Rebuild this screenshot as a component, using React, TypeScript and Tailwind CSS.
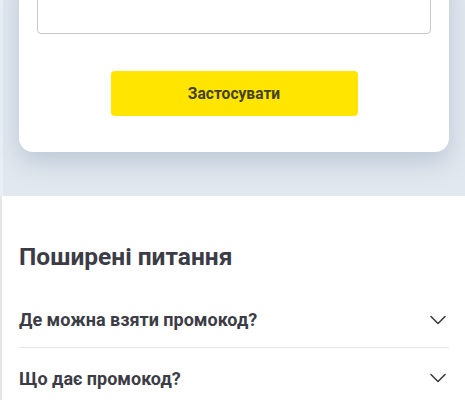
import React from "react";

function Chevron() {
  return (
    <svg width="18" height="18" viewBox="0 0 18 18" fill="none" className="shrink-0">
      <path d="M2 5.5 L9 12.5 L16 5.5" stroke="#3c3c46" strokeWidth="1.6" strokeLinecap="round" strokeLinejoin="round" />
    </svg>
  );
}

export default function App() {
  return (
    <div className="w-[465px] h-[400px] overflow-hidden bg-white" style={{ fontFamily: "Roboto, 'Noto Sans', sans-serif" }}>
      <div className="bg-[#e1e8ef] pr-[16px] pb-[44px] border-l-[3px] border-[#e9eff5] pl-[16px]">
        <div className="-mt-[30px] bg-white rounded-[14px] shadow-[0_10px_24px_rgba(120,140,165,0.35)] px-[18px] pt-[16px] pb-[36px] flex flex-col items-center">
          <div className="w-full h-[48px] border border-[#c9c9cc] rounded-[4px] bg-white" />
          <button className="mt-[37px] w-[247px] h-[45px] rounded-[4px] bg-[#ffe500] text-[#44401f] text-[15.6px] font-bold pt-[3px]">
            Застосувати
          </button>
        </div>
      </div>
      <div className="border-l-[2px] border-[#e6e6e8] pl-[17px] pr-[16px] pt-[46px] text-[#3c3c46]">
        <h2 className="text-[24.5px] font-bold leading-[30px]">Поширені питання</h2>
        <div className="mt-[20px]">
          <div className="flex items-center justify-between h-[56px] border-b border-[#e7e7ea]">
            <span className="text-[18px] font-bold">Де можна взяти промокод?</span>
            <span className="mr-[2px]"><Chevron /></span>
          </div>
          <div className="flex items-center justify-between h-[60px]">
            <span className="text-[18px] font-bold">Що дає промокод?</span>
            <span className="mr-[2px]"><Chevron /></span>
          </div>
        </div>
      </div>
    </div>
  );
}
